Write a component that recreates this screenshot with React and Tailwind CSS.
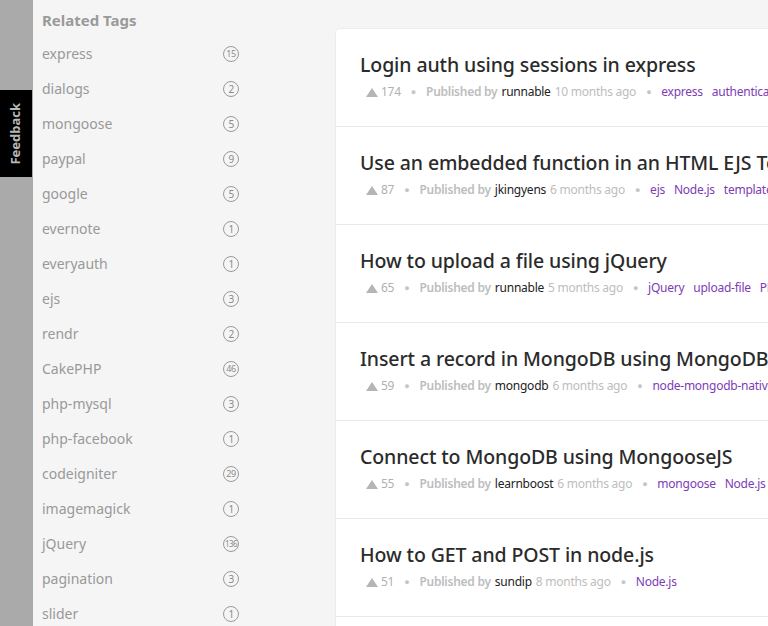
const tags = [
  ['express', 15],
  ['dialogs', 2],
  ['mongoose', 5],
  ['paypal', 9],
  ['google', 5],
  ['evernote', 1],
  ['everyauth', 1],
  ['ejs', 3],
  ['rendr', 2],
  ['CakePHP', 46],
  ['php-mysql', 3],
  ['php-facebook', 1],
  ['codeigniter', 29],
  ['imagemagick', 1],
  ['jQuery', 136],
  ['pagination', 3],
  ['slider', 1],
];

const posts = [
  { title: 'Login auth using sessions in express', votes: 174, author: 'runnable', ago: '10 months ago', tags: ['express', 'authentication'] },
  { title: 'Use an embedded function in an HTML EJS Template', votes: 87, author: 'jkingyens', ago: '6 months ago', tags: ['ejs', 'Node.js', 'templates'] },
  { title: 'How to upload a file using jQuery', votes: 65, author: 'runnable', ago: '5 months ago', tags: ['jQuery', 'upload-file', 'PHP'] },
  { title: 'Insert a record in MongoDB using MongoDB native driver', votes: 59, author: 'mongodb', ago: '6 months ago', tags: ['node-mongodb-native'] },
  { title: 'Connect to MongoDB using MongooseJS', votes: 55, author: 'learnboost', ago: '6 months ago', tags: ['mongoose', 'Node.js'] },
  { title: 'How to GET and POST in node.js', votes: 51, author: 'sundip', ago: '8 months ago', tags: ['Node.js'] },
  { title: 'Parse XML in node.js', votes: 48, author: 'runnable', ago: '8 months ago', tags: ['Node.js'] },
];

const font = { fontFamily: '"Noto Sans", "Open Sans", sans-serif' };

const Count = ({ n }) => (
  <span className="w-[16px] h-[16px] shrink-0 rounded-full border border-[#9a9a9a] flex items-center justify-center text-[#8a8a8a] leading-none tracking-[-0.5px]"
    style={{ fontSize: n > 99 ? '8px' : n > 9 ? '9px' : '10px' }}>
    {n}
  </span>
);

const Post = ({ post }) => (
  <div className="h-[98px] border-b border-[#e9e9e9] pl-[24px] pt-[21px] whitespace-nowrap overflow-hidden">
    <h2 className="text-[19.5px] leading-[30px] text-[#2b2b2b] font-medium tracking-[-0.1px]">{post.title}</h2>
    <div className="flex items-center text-[12px] leading-[16px] mt-[4px] pl-[6px] tracking-[-0.25px]">
      <svg width="12" height="9" viewBox="0 0 12 9" className="mr-[3px] shrink-0"><path d="M6 0 L12 9 L0 9 Z" fill="#b5b5b5" /></svg>
      <span className="text-[#b0b0b0] shrink-0">{post.votes}</span>
      <span className="text-[#c5c5c5] mx-[10px] text-[9px] shrink-0">●</span>
      <span className="text-[#bdbdbd] font-semibold shrink-0">Published by</span>
      <span className="text-[#222] ml-[4px] shrink-0">{post.author}</span>
      <span className="text-[#bdbdbd] ml-[4px] shrink-0">{post.ago}</span>
      <span className="text-[#c5c5c5] mx-[10px] text-[9px] shrink-0">●</span>
      {post.tags.map((t) => (
        <span key={t} className="text-[#7d3cb5] mr-[9px] shrink-0">{t}</span>
      ))}
    </div>
  </div>
);

export default function App() {
  return (
    <div className="flex w-[768px] h-[626px] overflow-hidden bg-[#f5f5f5]" style={font}>
      <div className="w-[33px] shrink-0 bg-[#aaaaaa] relative">
        <div className="absolute left-0 top-[90px] w-[32px] h-[87px] bg-black flex items-center justify-center">
          <span className="text-[#b8b8b8] font-bold text-[13px] -rotate-90 whitespace-nowrap">Feedback</span>
        </div>
      </div>
      <aside className="w-[302px] shrink-0 pl-[9px] pt-[9px]">
        <h3 className="text-[15px] leading-[22px] font-bold text-[#9a9a9a]">Related Tags</h3>
        <ul className="mt-[5px]">
          {tags.map(([name, n]) => (
            <li key={name} className="h-[35px] flex items-center">
              <span className="w-[181px] text-[14px] text-[#999]">{name}</span>
              <Count n={n} />
            </li>
          ))}
        </ul>
      </aside>
      <main className="flex-1 mt-[28px] bg-white border-l border-t border-[#ececec] rounded-tl-[5px] min-w-0">
        {posts.map((p) => (
          <Post key={p.title} post={p} />
        ))}
      </main>
    </div>
  );
}
